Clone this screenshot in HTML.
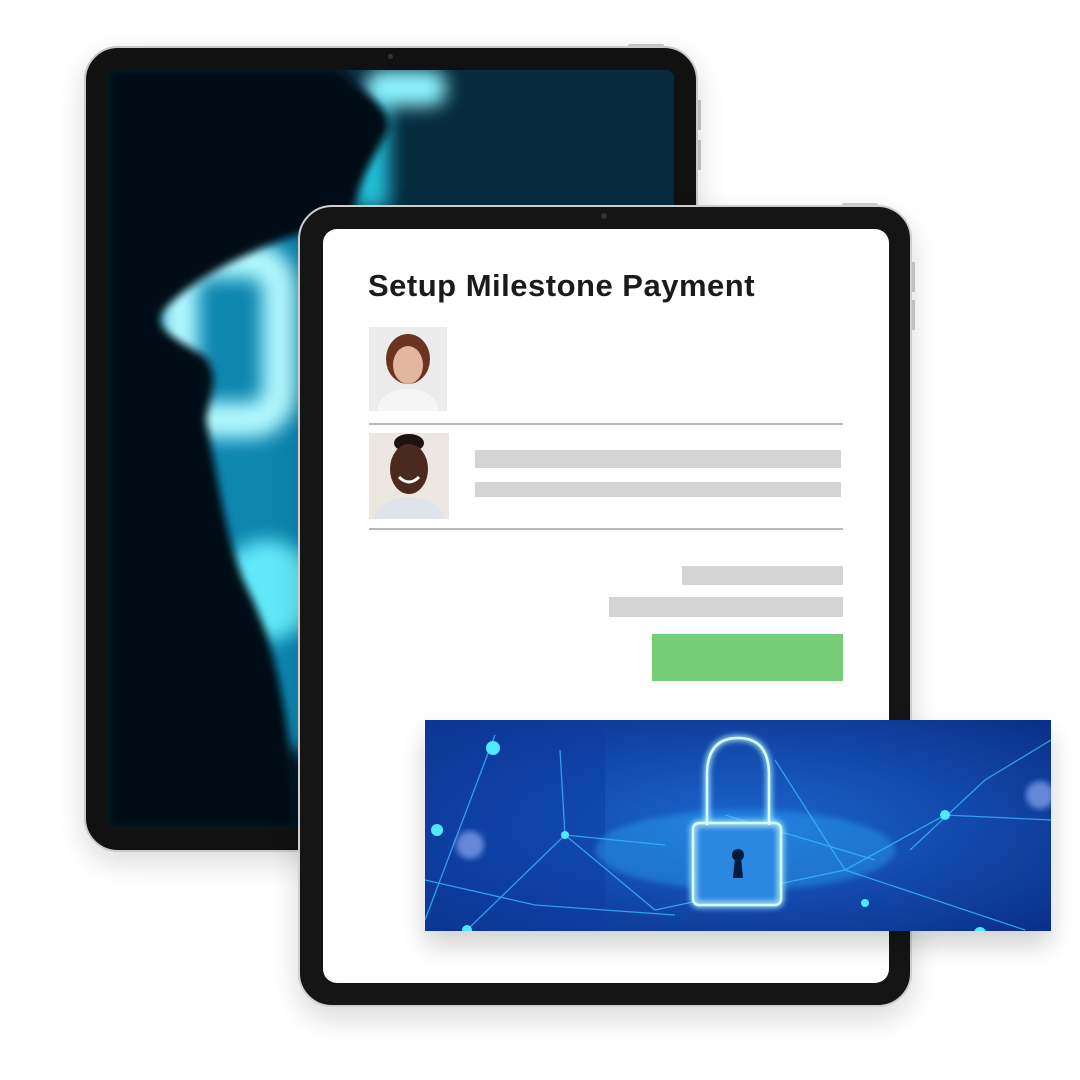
<!DOCTYPE html>
<html><head><style>
*{margin:0;padding:0;box-sizing:border-box}
body{width:1080px;height:1080px;background:#fff;position:relative;overflow:hidden;font-family:"Liberation Sans",sans-serif}
.abs{position:absolute}
.back{left:84px;top:46px;width:614px;height:806px;border-radius:34px;background:#111;border:2px solid #c9c9c9;box-shadow:0 10px 30px rgba(0,0,0,.15)}
.bscreen{left:108px;top:70px;width:566px;height:758px;border-radius:8px;overflow:hidden;background:#03121c}
.front{left:298px;top:205px;width:614px;height:802px;border-radius:34px;background:#151515;border:2px solid #cfcfcf;box-shadow:0 12px 30px rgba(0,0,0,.15)}
.fscreen{left:323px;top:229px;width:566px;height:754px;border-radius:14px;background:#fff}
.bar{background:#d4d4d4;position:absolute}
.line{background:#b8b8b8;height:2px;position:absolute}
</style></head><body>
<div class="abs" style="left:628px;top:44px;width:36px;height:4px;background:#c9c9c9;border-radius:2px"></div>
<div class="abs" style="left:697px;top:100px;width:4px;height:30px;background:#c9c9c9"></div>
<div class="abs" style="left:697px;top:140px;width:4px;height:30px;background:#c9c9c9"></div>
<div class="abs back"></div>
<div class="abs bscreen">
<svg width="566" height="758" viewBox="0 0 566 758">
<defs>
<filter id="bl" x="-50%" y="-50%" width="200%" height="200%"><feGaussianBlur stdDeviation="9"/></filter>
<filter id="bl2" x="-20%" y="-20%" width="140%" height="140%"><feGaussianBlur stdDeviation="4"/></filter>
</defs>
<rect width="566" height="758" fill="#041b2a"/>
<rect x="230" y="0" width="336" height="160" fill="#062a3e"/>
<rect x="40" y="160" width="200" height="520" fill="#0a86b0" filter="url(#bl)"/>
<g filter="url(#bl)">
<rect x="258" y="0" width="80" height="36" rx="15" fill="#8ff4ff"/>
<rect x="245" y="30" width="36" height="110" fill="#20c0d8"/>
<rect x="72" y="190" width="100" height="160" rx="30" fill="none" stroke="#b0f8ff" stroke-width="36"/>
<circle cx="160" cy="520" r="50" fill="#60e8f8"/>
</g>
<path d="M0 0 H232 C250 20 285 35 280 60 C265 90 250 110 245 140 C210 160 120 180 60 235 C40 255 60 265 95 285 C115 305 100 330 98 350 C112 420 120 480 140 520 C170 580 182 650 188 758 H0Z" fill="#030b12" filter="url(#bl2)"/>
</svg>
</div>
<div class="abs" style="left:842px;top:203px;width:36px;height:4px;background:#cfcfcf;border-radius:2px"></div>
<div class="abs" style="left:911px;top:262px;width:4px;height:30px;background:#cfcfcf"></div>
<div class="abs" style="left:911px;top:300px;width:4px;height:30px;background:#cfcfcf"></div>
<div class="abs front"></div>
<div class="abs" style="left:601px;top:213px;width:6px;height:6px;border-radius:3px;background:#333"></div>
<div class="abs" style="left:388px;top:54px;width:5px;height:5px;border-radius:3px;background:#333"></div>
<div class="abs fscreen">
<div class="abs" style="left:45px;top:39px;font-size:31px;font-weight:bold;color:#1b1b1b;letter-spacing:.5px">Setup Milestone Payment</div>
<div class="abs" style="left:46px;top:98px;width:78px;height:84px;background:#ececec;overflow:hidden">
<svg width="78" height="84"><ellipse cx="39" cy="32" rx="22" ry="25" fill="#6a3421"/><ellipse cx="39" cy="38" rx="15" ry="19" fill="#e3b59c"/><path d="M8 84 C10 66 28 62 39 62 C50 62 68 66 70 84Z" fill="#f5f5f3"/></svg>
</div>
<div class="line" style="left:46px;top:194px;width:474px"></div>
<div class="abs" style="left:46px;top:204px;width:80px;height:86px;background:#ede7e2;overflow:hidden">
<svg width="80" height="86"><ellipse cx="40" cy="10" rx="15" ry="9" fill="#1d1411"/><ellipse cx="40" cy="36" rx="19" ry="25" fill="#4a2a1e"/><path d="M30 44 Q40 54 50 44" stroke="#fff" stroke-width="3" fill="none"/><path d="M4 86 C8 70 26 64 40 64 C54 64 72 70 76 86Z" fill="#dfe4ea"/></svg>
</div>
<div class="bar" style="left:152px;top:221px;width:366px;height:18px"></div>
<div class="bar" style="left:152px;top:253px;width:366px;height:15px"></div>
<div class="line" style="left:46px;top:299px;width:474px"></div>
<div class="bar" style="left:359px;top:337px;width:161px;height:19px"></div>
<div class="bar" style="left:286px;top:368px;width:234px;height:20px"></div>
<div class="abs" style="left:329px;top:405px;width:191px;height:47px;background:#76cd78"></div>
</div>
<div class="abs" style="left:425px;top:720px;width:626px;height:211px;overflow:hidden;box-shadow:0 14px 24px rgba(0,0,0,.18)">
<svg width="626" height="211" viewBox="0 0 626 211">
<defs>
<radialGradient id="g1" cx=".5" cy=".5" r=".7"><stop offset="0" stop-color="#1a66d0"/><stop offset="1" stop-color="#0a2f88"/></radialGradient>
<filter id="gl"><feGaussianBlur stdDeviation="3"/></filter>
</defs>
<rect width="626" height="211" fill="url(#g1)"/>
<rect x="0" y="0" width="180" height="211" fill="#0b3c9f" opacity=".5"/>
<g stroke="#3ab8ff" stroke-width="1.3" fill="none" opacity=".8">
<path d="M0 200 L70 15 M42 210 L140 115 L230 190 M140 115 L135 30 M140 115 L240 125 M230 190 L420 150 L520 95 L626 100 M420 150 L600 210 M485 130 L560 60 L626 20 M0 160 L110 185 L250 195 M300 95 L450 140 M350 40 L420 150"/>
</g>
<ellipse cx="320" cy="130" rx="150" ry="40" fill="#36b6ff" opacity=".35" filter="url(#gl)"/>
<g stroke="#a8f0ff" stroke-width="5" fill="none" filter="url(#gl)">
<path d="M282 105 V55 Q282 18 313 18 Q344 18 344 55 V105"/>
<rect x="268" y="103" width="88" height="82" rx="6" fill="#2a88e0"/>
</g>
<g stroke="#d8fbff" stroke-width="2.5" fill="none">
<path d="M282 105 V55 Q282 18 313 18 Q344 18 344 55 V105"/>
<rect x="268" y="103" width="88" height="82" rx="6"/>
</g>
<circle cx="313" cy="135" r="6" fill="#041a40"/><path d="M310 137 L308 158 H318 L316 137Z" fill="#041a40"/>
<g fill="#4fe8ff">
<circle cx="140" cy="115" r="4"/><circle cx="42" cy="210" r="5"/><circle cx="12" cy="110" r="6"/><circle cx="68" cy="28" r="7"/><circle cx="520" cy="95" r="5"/><circle cx="555" cy="213" r="6"/><circle cx="440" cy="183" r="4"/><circle cx="237" cy="222" r="4"/>
</g>
<circle cx="45" cy="125" r="14" fill="#9fb8ff" opacity=".6" filter="url(#gl)"/>
<circle cx="615" cy="75" r="14" fill="#9fb8ff" opacity=".6" filter="url(#gl)"/>
</svg>
</div>
</body></html>
